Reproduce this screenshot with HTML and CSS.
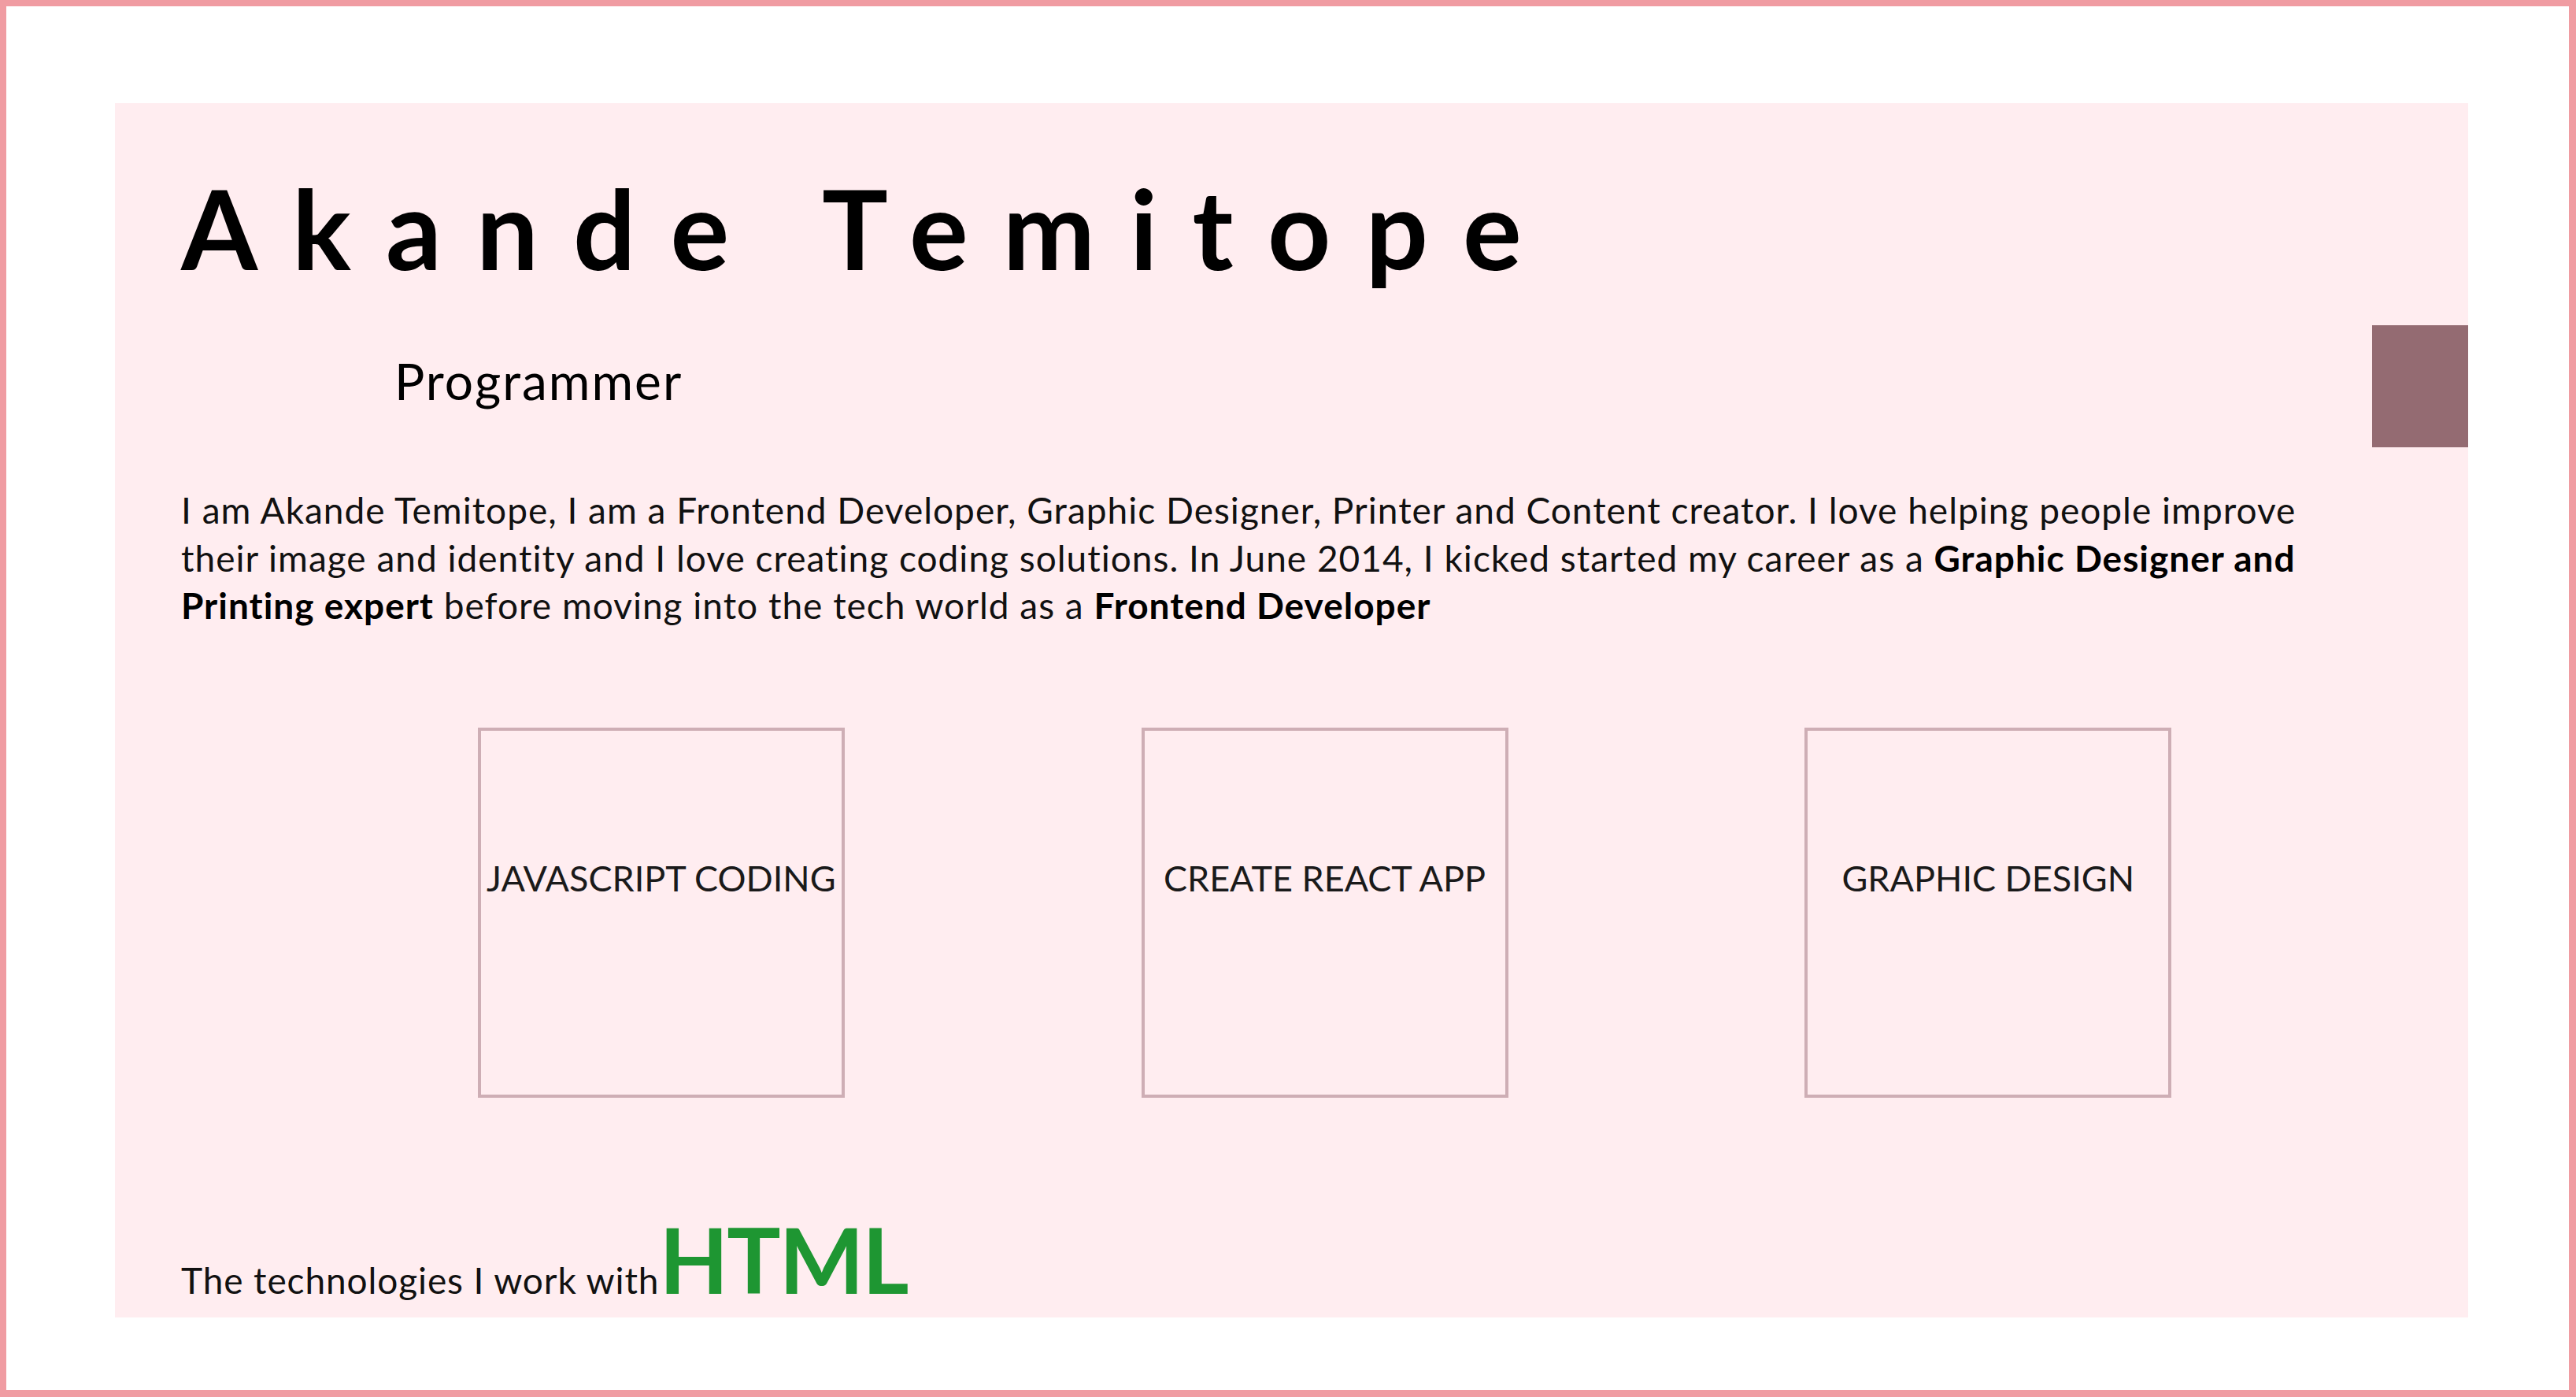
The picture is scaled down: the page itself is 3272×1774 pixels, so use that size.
FILE: index.html
```html
<!DOCTYPE html>
<html lang="en">
<head>
<meta charset="utf-8">
<title>Akande Temitope</title>
<link rel="stylesheet" href="styles.css">
</head>
<body>
<div class="frame">
  <main class="card">
    <h1 class="name">Akande Temitope</h1>
    <div class="role-row">
      <h2 class="role">Programmer</h2>
      <div class="swatch"></div>
    </div>
    <p class="bio">I am Akande Temitope, I am a Frontend Developer, Graphic Designer, Printer and Content creator. I love helping people improve their image and identity and I love creating coding solutions. In June 2014, I kicked started my career as a <b>Graphic Designer and Printing expert</b> before moving into the tech world as a <b>Frontend Developer</b></p>
    <div class="services">
      <div class="service"><p>JAVASCRIPT CODING</p></div>
      <div class="service"><p>CREATE REACT APP</p></div>
      <div class="service"><p>GRAPHIC DESIGN</p></div>
    </div>
    <p class="tech">The technologies I work with<span class="tech-name">HTML</span></p>
  </main>
</div>
</body>
</html>
```

FILE: styles.css
```css
html, body {
  margin: 0;
  padding: 0;
  background: #ffffff;
}

body {
  font-family: Lato, "Open Sans", sans-serif;
  color: #111111;
}

.frame {
  box-sizing: border-box;
  height: 1774px;
  border: 8px solid #f09ca2;
  border-right-width: 9px;
  border-bottom-width: 9px;
  padding: 123px 128px 0 138px;
}

.card {
  background: #ffedf0;
  padding: 74px 0 6px 84px;
  display: flex;
  flex-direction: column;
}

.name {
  margin: 0;
  font-family: Lato, sans-serif;
  font-weight: 700;
  font-size: 140px;
  line-height: normal;
  letter-spacing: 44px;
  color: #000000;
}

.role-row {
  margin-top: 40px;
  display: flex;
  justify-content: space-between;
  align-items: flex-start;
}

.role {
  margin: 32px 0 0 271px;
  font-weight: 400;
  font-size: 64px;
  letter-spacing: 2px;
  line-height: normal;
  color: #000000;
}

.swatch {
  width: 122px;
  height: 155px;
  background: #946b72;
}

.bio {
  margin: 50px 0 0 0;
  width: 2730px;
  font-size: 46px;
  letter-spacing: 1px;
  line-height: 60.5px;
  color: #111111;
}

.bio b {
  font-weight: 700;
  color: #000000;
}

.services {
  margin-top: 124px;
  display: flex;
  justify-content: space-evenly;
}

.service {
  box-sizing: border-box;
  width: 466px;
  height: 470px;
  border: 4px solid #ceaeb5;
  padding-top: 160px;
  text-align: center;
}

.service p {
  margin: 0;
  font-size: 45px;
  line-height: normal;
  color: #1a1a1a;
  white-space: nowrap;
}

.tech {
  margin: 136px 0 0 0;
  font-size: 46px;
  letter-spacing: 0.9px;
  line-height: normal;
  color: #111111;
}

.tech-name {
  font-weight: 700;
  font-size: 114px;
  letter-spacing: -2px;
  color: #1e9632;
}
```
